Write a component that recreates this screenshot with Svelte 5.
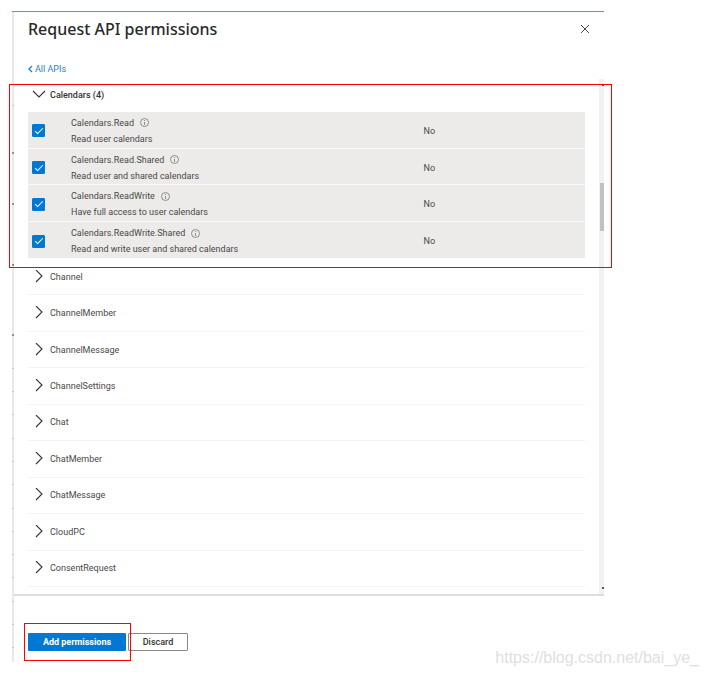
<script lang="ts">
	type Permission = { name: string; description: string; consent: string; checked: boolean };

	let permissions: Permission[] = $state([
		{ name: 'Calendars.Read', description: 'Read user calendars', consent: 'No', checked: true },
		{ name: 'Calendars.Read.Shared', description: 'Read user and shared calendars', consent: 'No', checked: true },
		{ name: 'Calendars.ReadWrite', description: 'Have full access to user calendars', consent: 'No', checked: true },
		{ name: 'Calendars.ReadWrite.Shared', description: 'Read and write user and shared calendars', consent: 'No', checked: true }
	]);

	const groups = [
		'Channel',
		'ChannelMember',
		'ChannelMessage',
		'ChannelSettings',
		'Chat',
		'ChatMember',
		'ChatMessage',
		'CloudPC',
		'ConsentRequest'
	];

	// remains of the page that lies behind the panel
	const ticks = [93, 356, 379, 402, 426, 449, 472, 496, 519, 542, 565, 589, 612, 635];
	const specks = [140, 191, 252, 322];

	let open = $state(true);
	let selected = $derived(permissions.filter((p) => p.checked).length);
</script>

<div class="page">
	<main class="panel">
		<svg class="edge" width="2" height="650" aria-hidden="true">
			<rect width="2" height="650" fill="#e9e9e9" />
			{#each ticks as y}
				<rect {y} width="2" height="1" fill="#c8c8c8" />
			{/each}
			{#each specks as y}
				<rect {y} width="2" height="2" fill="#8b9398" />
			{/each}
		</svg>

		<header>
			<h1>Request API permissions</h1>
			<button class="close" aria-label="Close">
				<svg width="10" height="10" viewBox="0 0 10 10">
					<path d="M1 1l8 8M9 1L1 9" fill="none" stroke="#444" />
				</svg>
			</button>
		</header>

		<nav>
			<a href="#apis">
				<svg width="5" height="8" viewBox="0 0 5 8" aria-hidden="true">
					<path d="M4 1L1 4l3 3" fill="none" stroke="#1a7fd8" stroke-width="1.3" />
				</svg>
				All APIs
			</a>
		</nav>

		<div class="body">
			<div class="content">
				<section class="marked">
					<button class="group expanded" aria-expanded={open} onclick={() => (open = !open)}>
						<svg width="14" height="14" viewBox="0 0 14 14" aria-hidden="true">
							<path d="M1 3l6 6 6-6" fill="none" stroke="#333" stroke-width="1.1" />
						</svg>
						Calendars ({selected})
					</button>
					{#if open}
						<table>
							<tbody>
								{#each permissions as permission, i}
									<tr>
										<td class="check">
											<input type="checkbox" id="permission-{i}" bind:checked={permission.checked} />
										</td>
										<td class="name">
											<label for="permission-{i}">
												<span class="title">
													{permission.name}
													<svg width="9" height="9" viewBox="0 0 9 9" aria-hidden="true">
														<circle cx="4.5" cy="4.5" r="4" fill="none" stroke="#777" stroke-width="0.8" />
														<path d="M4.5 4v3M4.5 2v1" stroke="#777" stroke-width="0.8" />
													</svg>
												</span>
												<span>{permission.description}</span>
											</label>
										</td>
										<td class="consent">{permission.consent}</td>
									</tr>
								{/each}
							</tbody>
						</table>
					{/if}
				</section>

				<ul>
					{#each groups as group}
						<li>
							<button class="group" aria-expanded="false">
								<svg width="14" height="14" viewBox="0 0 14 14" aria-hidden="true">
									<path d="M4 0l6 6-6 6" fill="none" stroke="#333" stroke-width="1.1" />
								</svg>
								{group}
							</button>
						</li>
					{/each}
				</ul>
			</div>
			<div class="scrollbar" aria-hidden="true">
				<i class="arrow"></i>
				<i class="thumb"></i>
				<i class="arrow"></i>
			</div>
		</div>

		<footer>
			<span class="marked-button">
				<button class="primary">Add permissions</button>
			</span>
			<button class="secondary">Discard</button>
		</footer>
	</main>
	<p class="watermark">https://blog.csdn.net/bai_ye_</p>
</div>

<style>
	:global(body) {
		background: #fff;
	}
	.page {
		position: relative;
		min-height: 100vh;
		box-sizing: border-box;
		padding: 11px 104px 0 12px;
		font-family: Roboto, 'Open Sans', sans-serif;
		font-size: 9px;
		line-height: 16px;
		color: #484848;
	}
	.panel {
		position: relative;
		border-top: 1px solid #4b9bd5;
		padding-left: 2px;
	}
	.edge {
		position: absolute;
		left: 0;
		top: 0;
	}
	button {
		font: inherit;
		color: inherit;
		border: 0;
		padding: 0;
		background: none;
		cursor: pointer;
	}
	header {
		display: flex;
		justify-content: space-between;
		align-items: center;
		height: 34px;
		padding: 0 14px;
	}
	h1 {
		margin: 0;
		font-family: 'Noto Sans', 'Open Sans', sans-serif;
		font-size: 16px;
		line-height: 24px;
		font-weight: 500;
		color: #2a2a2a;
	}
	.close {
		display: flex;
	}
	nav {
		padding: 15px 14px 1px;
	}
	nav a {
		display: inline-flex;
		align-items: center;
		gap: 2px;
		color: #1a7fd8;
		text-decoration: none;
	}
	.body {
		display: flex;
		border-bottom: 2px solid #dedede;
	}
	.content {
		flex: 1;
		padding: 0 14px;
	}
	.marked {
		position: relative;
	}
	.marked::after {
		content: '';
		position: absolute;
		inset: 5px -27px -10px -19px;
		border: 1px solid #f00;
		pointer-events: none;
	}
	.group {
		display: flex;
		align-items: center;
		gap: 4px;
		width: 100%;
		padding-left: 4px;
		text-align: left;
	}
	.expanded {
		height: 33px;
		padding-bottom: 2px;
		font-weight: 500;
		color: #333;
	}
	table {
		width: 100%;
		height: 146px;
		border-collapse: collapse;
		table-layout: fixed;
		background: #edebe9;
	}
	td {
		padding: 2px 0 0;
		vertical-align: middle;
	}
	tr + tr td {
		border-top: 1px solid #fafafa;
	}
	.check {
		width: 43px;
	}
	.consent {
		width: 29%;
	}
	input {
		appearance: none;
		display: grid;
		place-items: center;
		width: 13px;
		height: 13px;
		margin: 0 4px;
		border: 1px solid #0078d4;
		border-radius: 1px;
		background: #fff;
	}
	input:checked {
		background: #0078d4;
	}
	input:checked::after {
		content: '';
		width: 7px;
		height: 3px;
		border: solid #fff;
		border-width: 0 0 1px 1px;
		transform: translateY(-1px) rotate(-45deg);
	}
	label,
	.title {
		display: flex;
	}
	label {
		flex-direction: column;
	}
	.title {
		align-items: center;
		gap: 6px;
	}
	ul {
		display: grid;
		grid-auto-rows: 1fr;
		min-height: 328px;
		margin: 0;
		padding: 1px 0 7px;
		list-style: none;
	}
	li {
		display: flex;
		border-bottom: 1px solid #f3f3f3;
	}
	.scrollbar {
		display: flex;
		flex-direction: column;
		justify-content: space-between;
		width: 5px;
		background: #f1f1f1;
		padding: 5px 0;
		box-sizing: border-box;
	}
	.arrow {
		align-self: flex-end;
		width: 2px;
		height: 2px;
		background: #555;
	}
	.thumb {
		height: 48px;
		margin: 97px 0 auto 1px;
		background: #c1c1c1;
	}
	footer {
		display: flex;
		gap: 2px;
		padding: 37px 14px 0;
	}
	.marked-button {
		position: relative;
	}
	.marked-button::after {
		content: '';
		position: absolute;
		inset: -10px -5px -10px -4px;
		border: 1px solid #f00;
		pointer-events: none;
	}
	footer button {
		display: block;
		height: 18px;
		border-radius: 1px;
	}
	.primary {
		width: 98px;
		background: #0078d4;
		color: #fff;
		font-weight: 700;
	}
	.secondary {
		width: 60px;
		border: 1px solid #8a8886;
		color: #333;
		font-weight: 500;
	}
	.watermark {
		position: absolute;
		right: 9px;
		bottom: 8px;
		margin: 0;
		font: 16px/20px 'Liberation Sans', Arial, sans-serif;
		color: #e0e0e0;
	}
</style>
